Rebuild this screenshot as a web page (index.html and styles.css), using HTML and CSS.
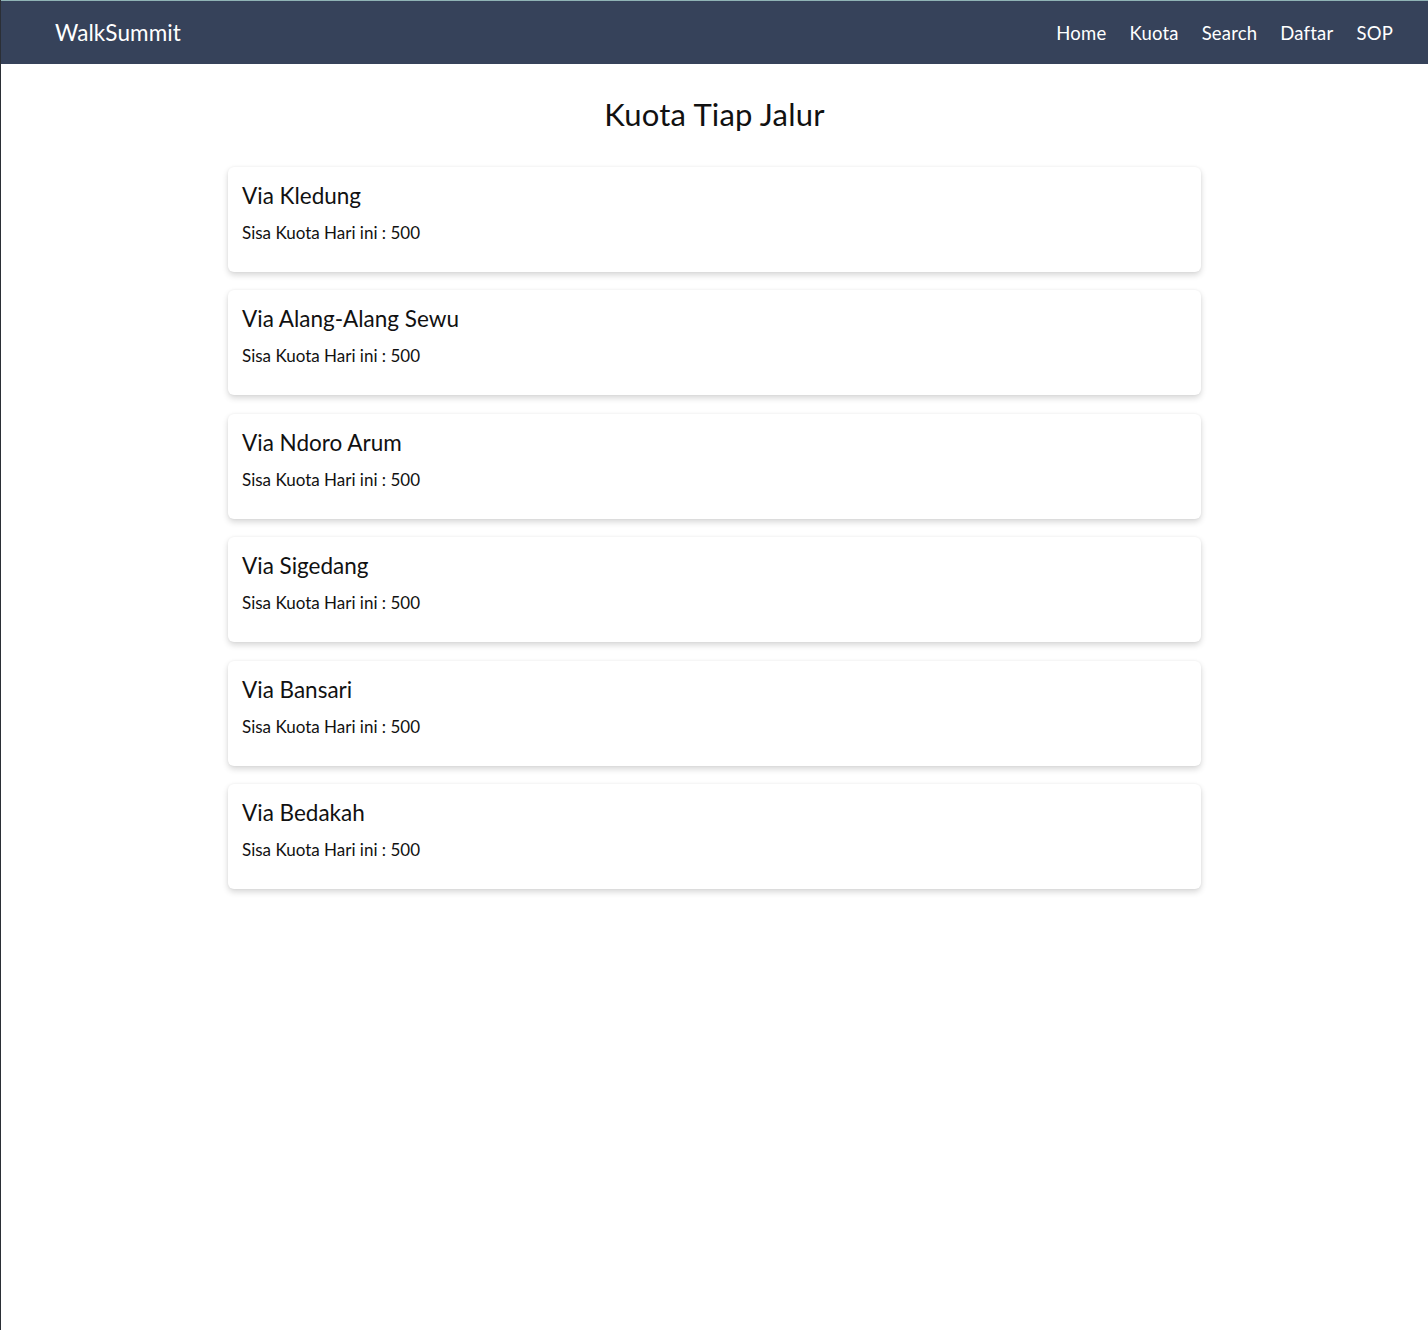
FILE: index.html
```html
<!DOCTYPE html>
<html lang="id">
<head>
<meta charset="utf-8">
<title>WalkSummit - Kuota</title>
<link rel="stylesheet" href="styles.css">
</head>
<body>
<nav class="navbar">
  <a class="brand" href="#">WalkSummit</a>
  <ul class="nav-links">
    <li><a href="#">Home</a></li>
    <li><a href="#">Kuota</a></li>
    <li><a href="#">Search</a></li>
    <li><a href="#">Daftar</a></li>
    <li><a href="#">SOP</a></li>
  </ul>
</nav>
<main class="content">
  <h1 class="page-title">Kuota Tiap Jalur</h1>
  <div class="card-list">
    <div class="card"><h2 class="card-title">Via Kledung</h2><p class="card-text">Sisa Kuota Hari ini : 500</p></div>
    <div class="card"><h2 class="card-title">Via Alang-Alang Sewu</h2><p class="card-text">Sisa Kuota Hari ini : 500</p></div>
    <div class="card"><h2 class="card-title">Via Ndoro Arum</h2><p class="card-text">Sisa Kuota Hari ini : 500</p></div>
    <div class="card"><h2 class="card-title">Via Sigedang</h2><p class="card-text">Sisa Kuota Hari ini : 500</p></div>
    <div class="card"><h2 class="card-title">Via Bansari</h2><p class="card-text">Sisa Kuota Hari ini : 500</p></div>
    <div class="card"><h2 class="card-title">Via Bedakah</h2><p class="card-text">Sisa Kuota Hari ini : 500</p></div>
  </div>
</main>
</body>
</html>
```
FILE: styles.css
```css
* { box-sizing: border-box; }
html, body {
  margin: 0;
  padding: 0;
  background: #ffffff;
  font-family: "Lato", "Noto Sans", sans-serif;
  color: #111;
}
body {
  min-height: 1330px;
  border-left: 1px solid #2b2f36;
}
.navbar {
  height: 64px;
  background: #36425a;
  border-top: 1px solid #8fb3b5;
  display: flex;
  align-items: center;
  justify-content: space-between;
  padding: 0 35px 0 54px;
}
.brand {
  color: #ffffff;
  text-decoration: none;
  font-size: 22.5px;
  letter-spacing: 0.1px;
}
.nav-links {
  list-style: none;
  display: flex;
  gap: 23px;
  margin: 0;
  padding: 0;
}
.nav-links a {
  color: #ffffff;
  text-decoration: none;
  font-size: 18.5px;
  letter-spacing: 0.2px;
}
.content {
  display: flex;
  flex-direction: column;
  align-items: center;
}
.page-title {
  font-weight: 400;
  font-size: 31px;
  letter-spacing: 0.2px;
  margin: 32px 0 35px;
  line-height: 36px;
}
.card-list {
  width: 973px;
  display: flex;
  flex-direction: column;
  gap: 18.4px;
}
.card {
  background: #fff;
  border-radius: 6px;
  box-shadow: 0 3px 6px rgba(0,0,0,0.16), 0 0 3px rgba(0,0,0,0.05);
  padding: 15px 14px 0;
  height: 105px;
}
.card-title {
  font-weight: 400;
  font-size: 22.5px;
  line-height: 28px;
  margin: 0 0 13px;
}
.card-text {
  margin: 0;
  font-size: 17px;
  letter-spacing: 0;
  line-height: 20px;
}
```
